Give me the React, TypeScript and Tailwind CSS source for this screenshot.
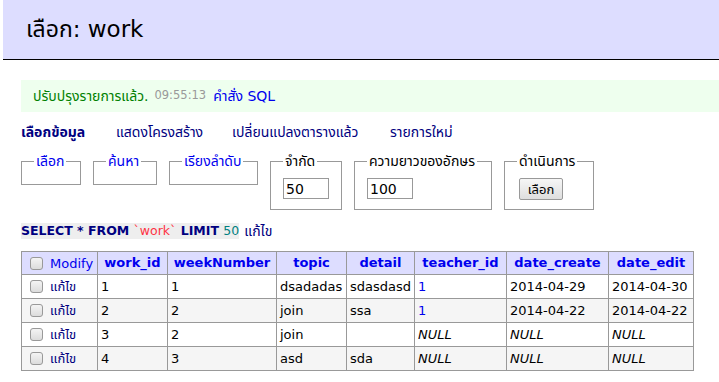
import React from "react";

const F = { fontFamily: '"DejaVu Sans", "Noto Sans Thai", "Noto Sans", sans-serif' };

function Check() {
  return (
    <span className="inline-block w-[13px] h-[13px] rounded-[3px] border border-[#999] bg-gradient-to-b from-[#f4f4f4] to-[#dcdcdc] align-middle" />
  );
}

function Fs({ legend, blue, w, children }: { legend: string; blue?: boolean; w: string; children?: React.ReactNode }) {
  return (
    <fieldset className={`border border-[#999] px-[12px] pt-0 ${w}`}>
      <legend className={`px-[2px] text-[14px] leading-[16px] ${blue ? "text-[#0000ee]" : "text-black"}`}>{legend}</legend>
      {children}
    </fieldset>
  );
}

const cols = [
  "w-[76px]",
  "w-[70px]",
  "w-[109px]",
  "w-[70px]",
  "w-[68px]",
  "w-[92px]",
  "w-[102px]",
  "w-[85px]",
];

type Row = { id: string; wk: string; topic: string; detail: string; t: string | null; dc: string | null; de: string | null };
const rows: Row[] = [
  { id: "1", wk: "1", topic: "dsadadas", detail: "sdasdasd", t: "1", dc: "2014-04-29", de: "2014-04-30" },
  { id: "2", wk: "2", topic: "join", detail: "ssa", t: "1", dc: "2014-04-22", de: "2014-04-22" },
  { id: "3", wk: "2", topic: "join", detail: "", t: null, dc: null, de: null },
  { id: "4", wk: "3", topic: "asd", detail: "sda", t: null, dc: null, de: null },
];

function Null() {
  return <i className="text-black">NULL</i>;
}

export default function App() {
  return (
    <div className="w-[719px] h-[382px] bg-white overflow-hidden text-black" style={F}>
      <div className="ml-[3px] h-[60px] bg-[#ddf] border-b border-black flex items-center pl-[23px]">
        <h2 className="text-[23px] leading-none font-normal">เลือก: work</h2>
      </div>
      <div className="ml-[21px] mt-[20px] h-[32px] bg-[#efe] flex items-center pl-[12px] text-[14px]">
        <span className="text-[#008000]">ปรับปรุงรายการแล้ว.</span>
        <span className="text-[#999] text-[11.5px] ml-[6px]">09:55:13</span>
        <span className="text-[#0000ee] ml-[7px]">คำสั่ง SQL</span>
      </div>
      <div className="ml-[21px] mt-[10px] flex text-[14px] leading-[20px] text-[#000080]">
        <span className="font-bold w-[95px]">เลือกข้อมูล</span>
        <span className="w-[116px]">แสดงโครงสร้าง</span>
        <span className="w-[158px]">เปลี่ยนแปลงตารางแล้ว</span>
        <span>รายการใหม่</span>
      </div>
      <div className="ml-[21px] mt-[11px] flex items-start gap-[12px]">
        <Fs legend="เลือก" blue w="w-[60px] h-[32px]" />
        <Fs legend="ค้นหา" blue w="w-[64px] h-[32px]" />
        <Fs legend="เรียงลำดับ" blue w="w-[89px] h-[32px]" />
        <Fs legend="จำกัด" w="w-[71px] h-[57px]">
          <input
            defaultValue="50"
            className="mt-[9px] w-[46px] h-[21px] border border-[#999] px-[2px] text-[14px] leading-none outline-none"
            style={F}
          />
        </Fs>
        <Fs legend="ความยาวของอักษร" w="w-[138px] h-[57px]">
          <input
            defaultValue="100"
            className="mt-[9px] w-[46px] h-[21px] border border-[#999] px-[2px] text-[14px] leading-none outline-none"
            style={F}
          />
        </Fs>
        <Fs legend="ดำเนินการ" w="w-[90px] h-[57px]">
          <button
            className="mt-[9px] ml-[2px] w-[44px] h-[22px] border border-[#999] rounded-[2px] bg-gradient-to-b from-[#f6f6f6] to-[#dedede] text-[13px] leading-none"
            style={F}
          >
            เลือก
          </button>
        </Fs>
      </div>
      <div className="ml-[21px] mt-[13px] flex items-center text-[12.5px] leading-[16px]">
        <code className="bg-[#eee] font-bold text-[#000080]" style={F}>
          SELECT * FROM <span className="font-normal text-[#ff3344]">`work`</span> LIMIT{" "}
          <span className="font-normal text-[#008080]">50</span>
        </code>
        <span className="ml-[5px] text-[#000080] text-[14px]">แก้ไข</span>
      </div>
      <table className="ml-[21px] mt-[12px] border-collapse border border-[#999] text-[13px] table-fixed w-[672px]">
        <colgroup>
          {cols.map((c, i) => (
            <col key={i} className={c} />
          ))}
        </colgroup>
        <thead>
          <tr className="bg-[#ddf] h-[23px]">
            <th className="border border-[#999] pl-[8px] pr-[2px] text-left font-normal text-[#0000ee] whitespace-nowrap">
              <Check />
              <span className="ml-[7px] align-middle">Modify</span>
            </th>
            {["work_id", "weekNumber", "topic", "detail", "teacher_id", "date_create", "date_edit"].map((h) => (
              <th key={h} className="border border-[#999] px-[3px] font-bold text-[#0000ee] whitespace-nowrap">
                {h}
              </th>
            ))}
          </tr>
        </thead>
        <tbody>
          {rows.map((r, i) => (
            <tr key={r.id} className={`h-[24px] ${i % 2 ? "bg-[#f5f5f5]" : "bg-white"}`}>
              <td className="border border-[#999] pl-[8px] pr-[2px] whitespace-nowrap">
                <Check />
                <span className="ml-[7px] align-middle text-[#000080]">แก้ไข</span>
              </td>
              <td className="border border-[#999] px-[3px] whitespace-nowrap">{r.id}</td>
              <td className="border border-[#999] px-[3px] whitespace-nowrap">{r.wk}</td>
              <td className="border border-[#999] px-[3px] whitespace-nowrap">{r.topic}</td>
              <td className="border border-[#999] px-[3px] whitespace-nowrap">{r.detail}</td>
              <td className="border border-[#999] px-[3px] whitespace-nowrap">{r.t ? <span className="text-[#0000ee]">{r.t}</span> : <Null />}</td>
              <td className="border border-[#999] px-[3px] whitespace-nowrap">{r.dc ?? <Null />}</td>
              <td className="border border-[#999] px-[3px] whitespace-nowrap">{r.de ?? <Null />}</td>
            </tr>
          ))}
        </tbody>
      </table>
    </div>
  );
}
